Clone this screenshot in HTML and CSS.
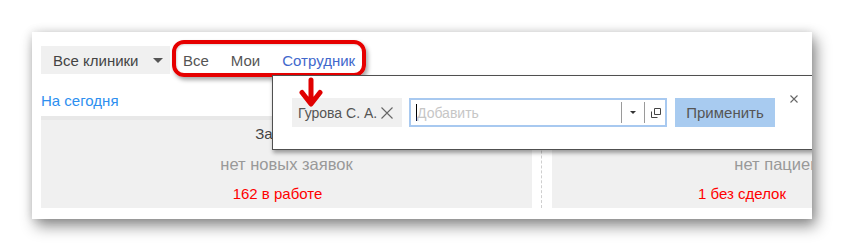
FILE: index.html
```html
<!DOCTYPE html>
<html lang="ru">
<head>
<meta charset="utf-8">
<title>Заявки</title>
<link rel="stylesheet" href="styles.css">
</head>
<body>
<div class="panel">
  <div class="toolbar">
    <div class="select">
      <span class="select-label">Все клиники</span>
      <span class="select-caret"></span>
    </div>
    <div class="tabs">
      <span class="tab">Все</span>
      <span class="tab">Мои</span>
      <span class="tab tab-active">Сотрудник</span>
    </div>
  </div>
  <a class="today" href="#">На сегодня</a>
  <div class="cards">
    <div class="card">
      <div class="card-title card-title-left">Заявки</div>
      <div class="card-empty">нет новых заявок</div>
      <div class="card-stats card-stats-left"><span>162 в работе</span></div>
    </div>
    <div class="divider"></div>
    <div class="card">
      <div class="card-title">Пациенты</div>
      <div class="card-empty card-empty-right">нет пациентов</div>
      <div class="card-stats"><span>1 без сделок</span><span>5 в работе</span></div>
    </div>
  </div>

  <div class="highlight"></div>

  <div class="popup">
    <div class="chip">
      <span>Гурова С. А.</span>
      <svg class="chip-x" width="12" height="12" viewBox="0 0 12 12"><path d="M0.5 0.5L11.5 11.5M11.5 0.5L0.5 11.5" stroke="#666" stroke-width="1.1" fill="none"/></svg>
    </div>
    <div class="input">
      <span class="caret"></span>
      <span class="placeholder">Добавить</span>
      <span class="input-sep"></span>
      <span class="input-arrow"></span>
      <span class="input-sep"></span>
      <svg class="input-copy" width="10" height="10" viewBox="0 0 10 10"><path d="M3.5 0.5H9.5V6.5H3.5Z" stroke="#444" fill="none"/><path d="M0.5 3.5V9.5H6.5" stroke="#444" fill="none"/></svg>
    </div>
    <button class="apply">Применить</button>
    <svg class="popup-close" width="8" height="8" viewBox="0 0 8 8"><path d="M0.5 0.5L7.5 7.5M7.5 0.5L0.5 7.5" stroke="#666" stroke-width="1.1" fill="none"/></svg>
  </div>

  <svg class="arrow" width="26" height="30" viewBox="0 0 26 30"><path d="M13 3V25M4 15.5L13 27L22 15.5" stroke="#e00000" stroke-width="5" fill="none" stroke-linecap="round" stroke-linejoin="round"/></svg>
</div>
</body>
</html>
```
FILE: styles.css
```css
* { box-sizing: border-box; }
html, body { margin: 0; padding: 0; background: #fff; }
body {
  font-family: "Liberation Sans", Arial, sans-serif;
  width: 844px;
  height: 251px;
  overflow: hidden;
}
.panel {
  position: relative;
  margin: 32px 0 0 32px;
  width: 780px;
  height: 187px;
  background: #fff;
  overflow: hidden;
  padding: 14px 0 0 9px;
  box-shadow: 4px 7px 14px rgba(0,0,0,0.45), 0 0 9px rgba(0,0,0,0.12);
}
.toolbar {
  display: flex;
  align-items: center;
  height: 28px;
}
.select {
  display: flex;
  align-items: center;
  width: 129px;
  height: 28px;
  background: #f0f0f0;
  padding-left: 12px;
  font-size: 15px;
  color: #444;
}
.select-label { width: 100px; }
.select-caret {
  width: 0; height: 0;
  border-left: 5px solid transparent;
  border-right: 5px solid transparent;
  border-top: 5px solid #555;
  margin-top: 1px;
}
.tabs {
  display: flex;
  padding-left: 13px;
  gap: 22px;
  font-size: 15px;
  color: #555;
}
.tab-active { color: #4168cc; }
.today {
  display: block;
  margin-top: 18px;
  font-size: 15px;
  line-height: 18px;
  color: #2d8ff0;
  text-decoration: none;
}
.cards {
  display: flex;
  margin-top: 6px;
  height: 92px;
}
.card {
  flex: 0 0 491px;
  background: #f0f0f0;
  border-top: 4px solid #e8e8e8;
  display: flex;
  flex-direction: column;
  align-items: center;
  padding-top: 5px;
}
.divider {
  flex: 0 0 11px;
  margin-left: 9px;
  border-left: 1px dashed #cfcfcf;
}
.card-title {
  font-size: 15px;
  line-height: 18px;
  color: #444;
}
.card-title-left { margin-right: 14px; }
.card-empty {
  margin-top: 11px;
  font-size: 16.5px;
  line-height: 20px;
  color: #999;
}
.card-empty-right { margin-right: 16px; }
.card-stats {
  margin-top: 10px;
  font-size: 15px;
  line-height: 20px;
  color: #ff0000;
  display: flex;
  gap: 38px;
}
.card-stats-left { margin-right: 18px; }
.highlight {
  position: absolute;
  left: 140px;
  top: 8px;
  width: 194px;
  height: 37px;
  border: 4px solid #e60000;
  border-radius: 12px;
  box-shadow: 2px 3px 4px rgba(0,0,0,0.35), inset 1px 1px 2px rgba(0,0,0,0.15);
}
.popup {
  position: absolute;
  left: 240px;
  top: 43px;
  width: 600px;
  height: 75px;
  background: #fff;
  border: 1px solid #505050;
  box-shadow: 1px 3px 4px rgba(0,0,0,0.35);
  display: flex;
  align-items: flex-start;
  padding: 22px 0 0 19px;
}
.chip {
  display: flex;
  align-items: center;
  width: 110px;
  height: 29px;
  background: #f0f0f0;
  padding-left: 6px;
  gap: 4px;
  font-size: 14px;
  color: #555;
}
.chip-x { flex: none; }
.input {
  display: flex;
  align-items: center;
  margin-left: 7px;
  width: 258px;
  height: 29px;
  border: 2px solid #a8c9f0;
  padding-left: 5px;
}
.caret {
  width: 1px;
  height: 17px;
  background: #000;
}
.placeholder {
  font-size: 14px;
  color: #c6c6c6;
  width: 204px;
}
.input-sep {
  width: 1px;
  height: 21px;
  background: #9a9a9a;
}
.input-arrow {
  width: 0; height: 0;
  margin: 0 8px 0 8px;
  border-left: 3px solid transparent;
  border-right: 3px solid transparent;
  border-top: 3px solid #333;
}
.input-copy { margin-left: 6px; }
.apply {
  margin-left: 8px;
  width: 100px;
  height: 29px;
  border: none;
  background: #a8cbf0;
  font-family: "Liberation Sans", Arial, sans-serif;
  font-size: 15px;
  color: #555;
  padding: 0;
}
.popup-close {
  margin: -3px 0 0 15px;
}
.arrow {
  position: absolute;
  left: 266px;
  top: 45px;
}
```
